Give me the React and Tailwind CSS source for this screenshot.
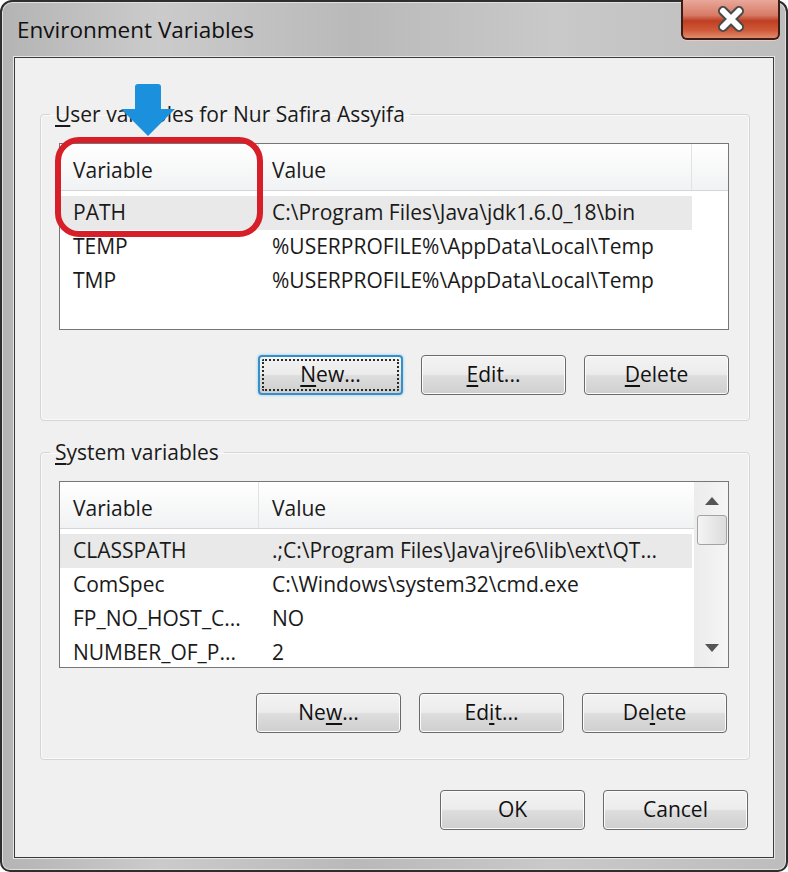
import React from 'react'

const userVars = [
  { name: 'PATH', value: 'C:\\Program Files\\Java\\jdk1.6.0_18\\bin', selected: true },
  { name: 'TEMP', value: '%USERPROFILE%\\AppData\\Local\\Temp' },
  { name: 'TMP', value: '%USERPROFILE%\\AppData\\Local\\Temp' },
]

const systemVars = [
  { name: 'CLASSPATH', value: '.;C:\\Program Files\\Java\\jre6\\lib\\ext\\QT...', selected: true },
  { name: 'ComSpec', value: 'C:\\Windows\\system32\\cmd.exe' },
  { name: 'FP_NO_HOST_C...', value: 'NO' },
  { name: 'NUMBER_OF_P...', value: '2' },
]

function Button({ children, focused }) {
  if (focused) {
    return (
      <div className="w-[145px] h-[40px] rounded-[4px] border-2 border-[#3a8ec6] p-[2px] shadow-[0_0_3px_#7cc8f0] bg-[linear-gradient(to_bottom,#f3f3f3_0%,#ececec_48%,#dddddd_52%,#cfcfcf_100%)]">
        <div className="h-full rounded-[2px] border-2 border-dotted border-[#2a2a2a] flex items-center justify-center text-[#111]">
          {children}
        </div>
      </div>
    )
  }
  return (
    <div className="w-[145px] h-[40px] rounded-[4px] border border-[#6a6a6a] shadow-[inset_0_0_0_1px_#fcfcfc] bg-[linear-gradient(to_bottom,#f3f3f3_0%,#ececec_48%,#dddddd_52%,#cfcfcf_100%)] flex items-center justify-center text-[#111]">
      {children}
    </div>
  )
}

function Header({ full }) {
  return (
    <div className="h-[47px] flex border-b border-[#d6d6d6] bg-gradient-to-b from-white to-[#f1f2f3] shrink-0">
      <div className="w-[199px] border-r border-[#e2e2e2] pl-[13px] flex items-center pt-[7px]">Variable</div>
      <div className={`${full ? 'w-[433px] border-r border-[#e2e2e2]' : 'flex-1'} pl-[13px] flex items-center pt-[7px]`}>Value</div>
      {full && <div className="flex-1" />}
    </div>
  )
}

function Rows({ rows, top }) {
  return (
    <div className={top}>
      {rows.map((r) => (
        <div key={r.name} className={`h-[34px] w-[632px] flex items-center ${r.selected ? 'bg-[#e9e9e9]' : ''}`}>
          <div className="w-[199px] pl-[13px] whitespace-nowrap">{r.name}</div>
          <div className="pl-[13px] whitespace-nowrap">{r.value}</div>
        </div>
      ))}
    </div>
  )
}

function Scrollbar() {
  return (
    <div className="w-[34px] h-full border-l border-[#ececec] bg-gradient-to-r from-[#ececec] to-[#f5f5f5] flex flex-col items-center py-[15px]">
      <svg width="14" height="8" viewBox="0 0 14 8"><path d="M0 8 L7 0 L14 8 Z" fill="#555" /></svg>
      <div className="mt-[10px] w-[30px] h-[30px] rounded-[3px] border border-[#a3a3a3] bg-gradient-to-r from-[#f4f4f4] to-[#dcdcdc]" />
      <div className="flex-1" />
      <svg width="14" height="8" viewBox="0 0 14 8"><path d="M0 0 L14 0 L7 8 Z" fill="#555" /></svg>
    </div>
  )
}

export default function App() {
  return (
    <div className="w-[788px] h-[872px] bg-white relative overflow-hidden font-['Open_Sans','Noto_Sans',sans-serif] text-[21px] text-[#1a1a1a]">
      <div className="h-full rounded-t-[12px] rounded-b-[10px] border-2 border-[#2e2e2e] bg-[linear-gradient(to_right,#b4b4b4,#cbcbcb_20%,#b9b9b9_45%,#c9c9c9_70%,#bdbdbd)] flex flex-col px-[12px] pb-[12px] shadow-[inset_0_0_0_1px_#e0e0e0]">
        {/* title bar */}
        <div className="h-[55px] shrink-0 flex items-start pt-[13px] pl-[3px]">
          <span className="text-[22.5px] leading-[30px] text-[#111]">Environment Variables</span>
        </div>

        {/* client area */}
        <div className="flex-1 border border-[#3a3a3a] shadow-[0_0_0_1px_#e6e6e6] bg-[#f0f0f0] pl-[25px] pr-[23px] pt-[43px]">
          <fieldset className="border border-[#d5d5d5] rounded-[4px] shadow-[inset_0_0_0_1px_#fafafa] p-0">
            <legend className="ml-[9px] px-[5px] leading-[26px]">
              <span className="underline underline-offset-[3px]">U</span>ser variables for Nur Safira Assyifa
            </legend>
            <div className="pt-[16px] pl-[18px] pr-[20px] pb-[25px]">
              <div className="h-[187px] border border-[#767676] bg-white flex flex-col overflow-hidden">
                <Header full />
                <Rows rows={userVars} top="pt-[5px]" />
              </div>
              <div className="mt-[25px] flex justify-end gap-[18px]">
                <Button focused><span><span className="underline underline-offset-[3px]">N</span>ew...</span></Button>
                <Button><span><span className="underline underline-offset-[3px]">E</span>dit...</span></Button>
                <Button><span><span className="underline underline-offset-[3px]">D</span>elete</span></Button>
              </div>
            </div>
          </fieldset>

          <fieldset className="mt-[18px] border border-[#d5d5d5] rounded-[4px] shadow-[inset_0_0_0_1px_#fafafa] p-0">
            <legend className="ml-[9px] px-[5px] leading-[26px]">
              <span className="underline underline-offset-[3px]">S</span>ystem variables
            </legend>
            <div className="pt-[16px] pl-[18px] pr-[20px] pb-[26px]">
              <div className="h-[187px] border border-[#767676] bg-white flex overflow-hidden">
                <div className="flex-1 flex flex-col min-w-0">
                  <Header />
                  <Rows rows={systemVars} top="pt-[5px]" />
                </div>
                <Scrollbar />
              </div>
              <div className="mt-[25px] flex justify-end gap-[18px] mr-[2px]">
                <Button>Ne<span className="underline underline-offset-[3px]">w</span>...</Button>
                <Button>Ed<span className="underline underline-offset-[3px]">i</span>t...</Button>
                <Button>De<span className="underline underline-offset-[3px]">l</span>ete</Button>
              </div>
            </div>
          </fieldset>

          <div className="mt-[30px] flex justify-end gap-[18px] mr-[2px]">
            <Button>OK</Button>
            <Button>Cancel</Button>
          </div>
        </div>
      </div>

      {/* close button */}
      <div className="absolute left-[681px] top-0 w-[99px] h-[40px] rounded-b-[6px] border-2 border-t-0 border-[#3b1c16] shadow-[0_1px_0_#f0c8c0] bg-[linear-gradient(to_bottom,#e9a89a_0%,#d77b66_40%,#bf3e22_55%,#cf5a3a_80%,#e08a6c_100%)] flex items-center justify-center">
        <svg width="34" height="26" viewBox="0 0 34 26">
          <path d="M9 5 L25 21 M25 5 L9 21" stroke="#4a4a4a" strokeWidth="10" strokeLinecap="round" />
          <path d="M9 5 L25 21 M25 5 L9 21" stroke="#ffffff" strokeWidth="6" strokeLinecap="round" />
        </svg>
      </div>

      {/* annotations */}
      <div className="absolute left-[55px] top-[137px] w-[208px] h-[100px] rounded-[24px] border-[6px] border-[#d71f2a]" />
      <svg className="absolute left-[117px] top-[82px]" width="62" height="56" viewBox="0 0 62 56">
        <path d="M18 5 Q18 2 21 2 L41 2 Q44 2 44 5 L44 27 L58 27 L31 54 L4 27 L18 27 Z" fill="#1b90dc" />
      </svg>
    </div>
  )
}
